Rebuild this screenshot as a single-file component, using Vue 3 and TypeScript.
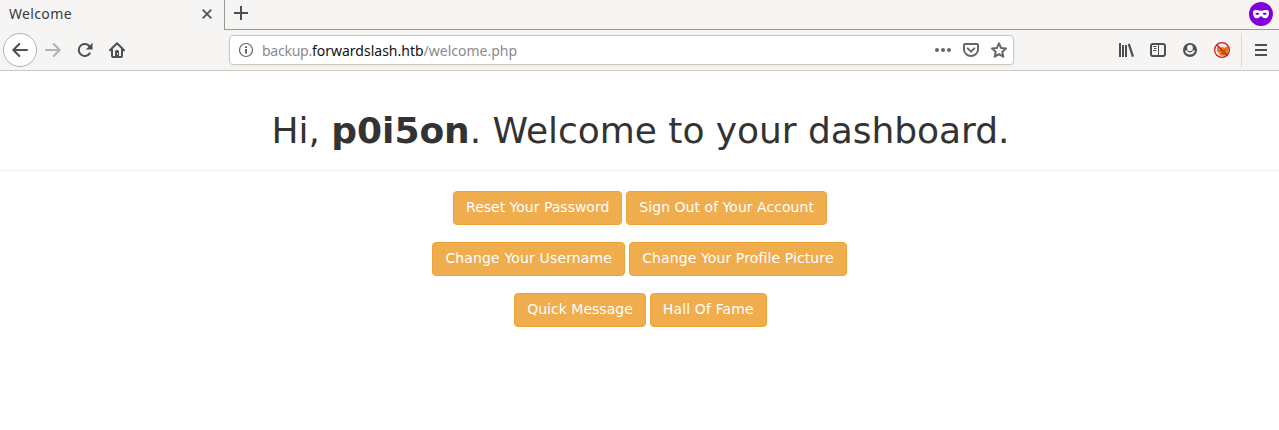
<script setup lang="ts">
interface Action {
  label: string
  tracking: number
}

const actionRows: Action[][] = [
  [
    { label: 'Reset Your Password', tracking: 0 },
    { label: 'Sign Out of Your Account', tracking: 0.04 },
  ],
  [
    { label: 'Change Your Username', tracking: 0.15 },
    { label: 'Change Your Profile Picture', tracking: 0.11 },
  ],
  [
    { label: 'Quick Message', tracking: 0.02 },
    { label: 'Hall Of Fame', tracking: 0.14 },
  ],
]
</script>

<template>
  <div class="browser">
    <header class="tabbar">
      <div class="tab">
        <span class="tab-title">Welcome</span>
        <svg class="close" width="12" height="12" viewBox="0 0 12 12"><path d="M1.700 1.700l8.600 8.600M10.300 1.700L1.700 10.300" /></svg>
      </div>
      <div class="strip">
        <svg class="plus" width="16" height="16" viewBox="0 0 16 16"><path d="M8 1v14M1 8h14" /></svg>
        <svg class="mask" width="24" height="24" viewBox="0 0 24 24">
          <circle cx="12" cy="12" r="12" fill="#8000d7" />
          <path fill="#fff" fill-rule="evenodd" d="M4 10.500C4 8.500 5.500 8 7.500 8c2 0 3 .8 4.500.8S14.500 8 16.500 8c2 0 3.500.5 3.500 2.500 0 3.500-1.500 5.800-4 5.800-2 0-2.800-2-4-2s-2 2-4 2c-2.500 0-4-2.300-4-5.800zM6.200 12c.8 1.200 3.600 1.200 4.300.1-.8-1.700-3.400-1.800-4.300-.1zM13.500 12.100c.7 1.100 3.500 1.100 4.300-.1-.9-1.700-3.500-1.600-4.300.1z" />
        </svg>
      </div>
    </header>

    <nav class="toolbar">
      <div class="nav-buttons">
        <span class="back">
          <svg class="line" width="16" height="16" viewBox="0 0 16 16"><path d="M15 8H1.500M7.300 2L1.300 8l6 6" /></svg>
        </span>
        <svg class="line forward" width="16" height="16" viewBox="0 0 16 16"><path d="M1 8h13.500M8.700 2l6 6-6 6" /></svg>
        <svg class="line reload" width="16" height="16" viewBox="0 0 16 16"><path d="M12.700 11.400A6 6 0 1 1 12.500 4.300" /><path class="solid" d="M15.500.8v6.700H8.800z" /></svg>
        <svg class="line" width="16" height="16" viewBox="0 0 16 16"><path d="M1 8.200L8 1.300l7 6.900M3 7.200V14q0 1 1 1h8q1 0 1-1V7.200" /><path class="solid" fill-rule="evenodd" d="M6 15V9.500Q6 8 7.500 8h1Q10 8 10 9.500V15zM8 11v1.500h1V11z" /></svg>
      </div>

      <div class="urlbar">
        <svg class="info" width="16" height="16" viewBox="0 0 16 16"><circle cx="8" cy="8" r="6.500" /><path d="M8 7v4.500M8 4.200v1.900" /></svg>
        <span class="url"><span class="subdomain">backup.</span><span class="domain">forwardslash.htb</span>/welcome.php</span>
        <div class="url-icons">
          <svg width="16" height="16" viewBox="0 0 16 16"><g fill="#666"><circle cx="2" cy="8" r="2" /><circle cx="8" cy="8" r="2" /><circle cx="14" cy="8" r="2" /></g></svg>
          <svg width="16" height="16" viewBox="0 0 16 16"><path d="M2 2h12q1 0 1 1v4.500a7 6.500 0 0 1-14 0V3q0-1 1-1z" /><path d="M4.700 6.400L8 9.600l3.300-3.200" /></svg>
          <svg width="16" height="16" viewBox="0 0 16 16"><path d="M8 1.300l2 4.600 5 .5-3.700 3.300 1 5L8 12.100l-4.300 2.600 1-5L1 6.400l5-.5z" /></svg>
        </div>
      </div>

      <div class="tools">
        <svg width="16" height="16" viewBox="0 0 16 16"><path fill="#4a5053" d="M1 1h2v14H1zM4 3h2v12H4zM7 3h2v12H7zM9.700 2.300l2.100-.8L16 14.200l-2.100.8z" /></svg>
        <svg class="line" width="16" height="16" viewBox="0 0 16 16"><rect x="1" y="2" width="14" height="12" rx="2" /><path class="thin" d="M8.500 2v12M3 4.500h3.500M4 6.500h2.500M3 8.500h3.500" /></svg>
        <svg width="16" height="16" viewBox="0 0 16 16"><circle cx="8" cy="8" r="7" fill="#4a5053" /><ellipse cx="8" cy="6" rx="2.900" ry="3.200" fill="#f6f5f4" /><path d="M3 8.500h2.200Q5.800 10.600 8 10.600t2.800-2.100H13Q12.300 12.500 8 12.500T3 8.500z" fill="#f6f5f4" /></svg>
        <svg width="16" height="16" viewBox="0 0 16 16">
          <circle cx="8" cy="8" r="7.300" fill="#f3e9e2" />
          <path fill="#e5800f" d="M3 6.800L3.500 4l2.500 1.700L8.500 5l2 .8L13.500 4l1.200 3-.4 4.500-2.800 2.500-5.300-.5-1-2.500L3 9.500z" />
          <path d="M6 8.500l1.500.5M10 8.500l1.500-.5M7.500 11.500l2.500-.3" stroke="#6b3510" stroke-width=".9" />
          <path d="M3 3l10 10" stroke="#c9141c" stroke-width="1.100" />
          <circle cx="8" cy="8" r="7.400" fill="none" stroke="#d3131c" stroke-width="1.200" />
        </svg>
        <span class="divider"></span>
        <svg class="menu" width="12" height="12" viewBox="0 0 12 12"><path fill="#4a5053" d="M0 0h12v2H0zM0 5h12v2H0zM0 10h12v2H0z" /></svg>
      </div>
    </nav>

    <main>
      <h1>Hi, <b>p0i5on</b>. Welcome to your dashboard.</h1>
      <div class="actions">
        <div v-for="(row, index) in actionRows" :key="index" class="row">
          <a
            v-for="action in row"
            :key="action.label"
            class="btn"
            :style="{ letterSpacing: `${action.tracking}px` }"
          >{{ action.label }}</a>
        </div>
      </div>
    </main>
  </div>
</template>

<style>
body {
  margin: 0;
  background: #fff;
}
</style>

<style scoped>
.browser {
  height: 430px;
  overflow: hidden;
  background: #fff;
  font-family: "Noto Sans", sans-serif;
}
svg {
  display: block;
  flex: none;
}
.tabbar {
  display: flex;
  height: 30px;
  background: #f6f5f4;
}
.tab {
  box-sizing: border-box;
  width: 225px;
  padding: 0 11px 2px 9px;
  border-right: 1px solid #999a97;
  display: flex;
  align-items: center;
  justify-content: space-between;
}
.tab-title {
  font-size: 14px;
  line-height: 20px;
  letter-spacing: 0.35px;
  color: #363b3d;
}
.close {
  stroke: #4a5053;
  stroke-width: 1.7;
}
.strip {
  flex: 1;
  box-sizing: border-box;
  border-bottom: 1px solid #999a97;
  padding: 0 6px 1px 8px;
  display: flex;
  align-items: center;
  justify-content: space-between;
}
.plus {
  margin-top: -2px;
  stroke: #4a5053;
  stroke-width: 2;
}
.toolbar {
  box-sizing: border-box;
  height: 41px;
  background: #f6f5f4;
  border-bottom: 1px solid #cdc7c2;
  padding: 0 12px 0 3px;
  display: flex;
  align-items: center;
}
.nav-buttons {
  width: 226px;
  display: flex;
  align-items: center;
}
.back {
  box-sizing: border-box;
  width: 34px;
  height: 34px;
  border: 1px solid #b1b2b0;
  border-radius: 50%;
  background: #fff;
  display: flex;
  align-items: center;
  justify-content: center;
}
.line {
  fill: none;
  stroke: #4a5053;
  stroke-width: 2;
  stroke-linecap: round;
  stroke-linejoin: round;
}
.solid {
  fill: #4a5053;
  stroke: none;
}
.thin {
  stroke-width: 1;
  stroke-linecap: butt;
}
.forward {
  margin-left: 8px;
  stroke: #b2b4b3;
}
.reload {
  margin: 0 16px;
}
.urlbar {
  box-sizing: border-box;
  width: 785px;
  height: 30px;
  border: 1px solid #cdc7c2;
  border-radius: 4px;
  background: #fff;
  box-shadow: 0 1px 3px rgba(0, 0, 0, 0.06);
  padding: 0 6px 0 8px;
  display: flex;
  align-items: center;
}
.info {
  fill: none;
  stroke: #666;
  stroke-width: 1.2;
}
.info path {
  stroke-width: 2;
}
.url {
  margin-left: 8px;
  padding-top: 1px;
  font-size: 14px;
  line-height: 20px;
  white-space: nowrap;
  color: #8b8b8b;
}
.subdomain {
  letter-spacing: -0.25px;
}
.domain {
  color: #111;
}
.url-icons {
  margin-left: auto;
  display: flex;
  gap: 12px;
  fill: none;
  stroke: #666;
  stroke-width: 2;
  stroke-linecap: round;
  stroke-linejoin: round;
}
.url-icons g {
  stroke: none;
}
.tools {
  margin-left: auto;
  display: flex;
  align-items: center;
  gap: 16px;
}
.divider {
  width: 1px;
  height: 34px;
  margin: 0 -3px 0 -5px;
  background: #d9d8d6;
}
main {
  font-family: "DejaVu Sans", sans-serif;
  text-align: center;
}
h1 {
  margin: 40px 0 20px;
  padding-left: 2px;
  height: 59px;
  border-bottom: 1px solid #eee;
  font-size: 36px;
  line-height: 40px;
  letter-spacing: -0.04px;
  font-weight: 400;
  color: #333;
  white-space: nowrap;
}
.actions {
  display: flex;
  flex-direction: column;
  gap: 17px;
}
.row {
  display: flex;
  justify-content: center;
  gap: 4px;
  padding-left: 1px;
}
.row:nth-child(2) {
  padding-left: 0;
}
.row:nth-child(3) {
  padding-left: 2px;
}
.btn {
  box-sizing: border-box;
  height: 34px;
  padding: 5px 12px 7px;
  border: 1px solid #eea236;
  border-radius: 4px;
  background: #f0ad4e;
  color: #fff;
  font-size: 14px;
  line-height: 20px;
  white-space: nowrap;
}
</style>
